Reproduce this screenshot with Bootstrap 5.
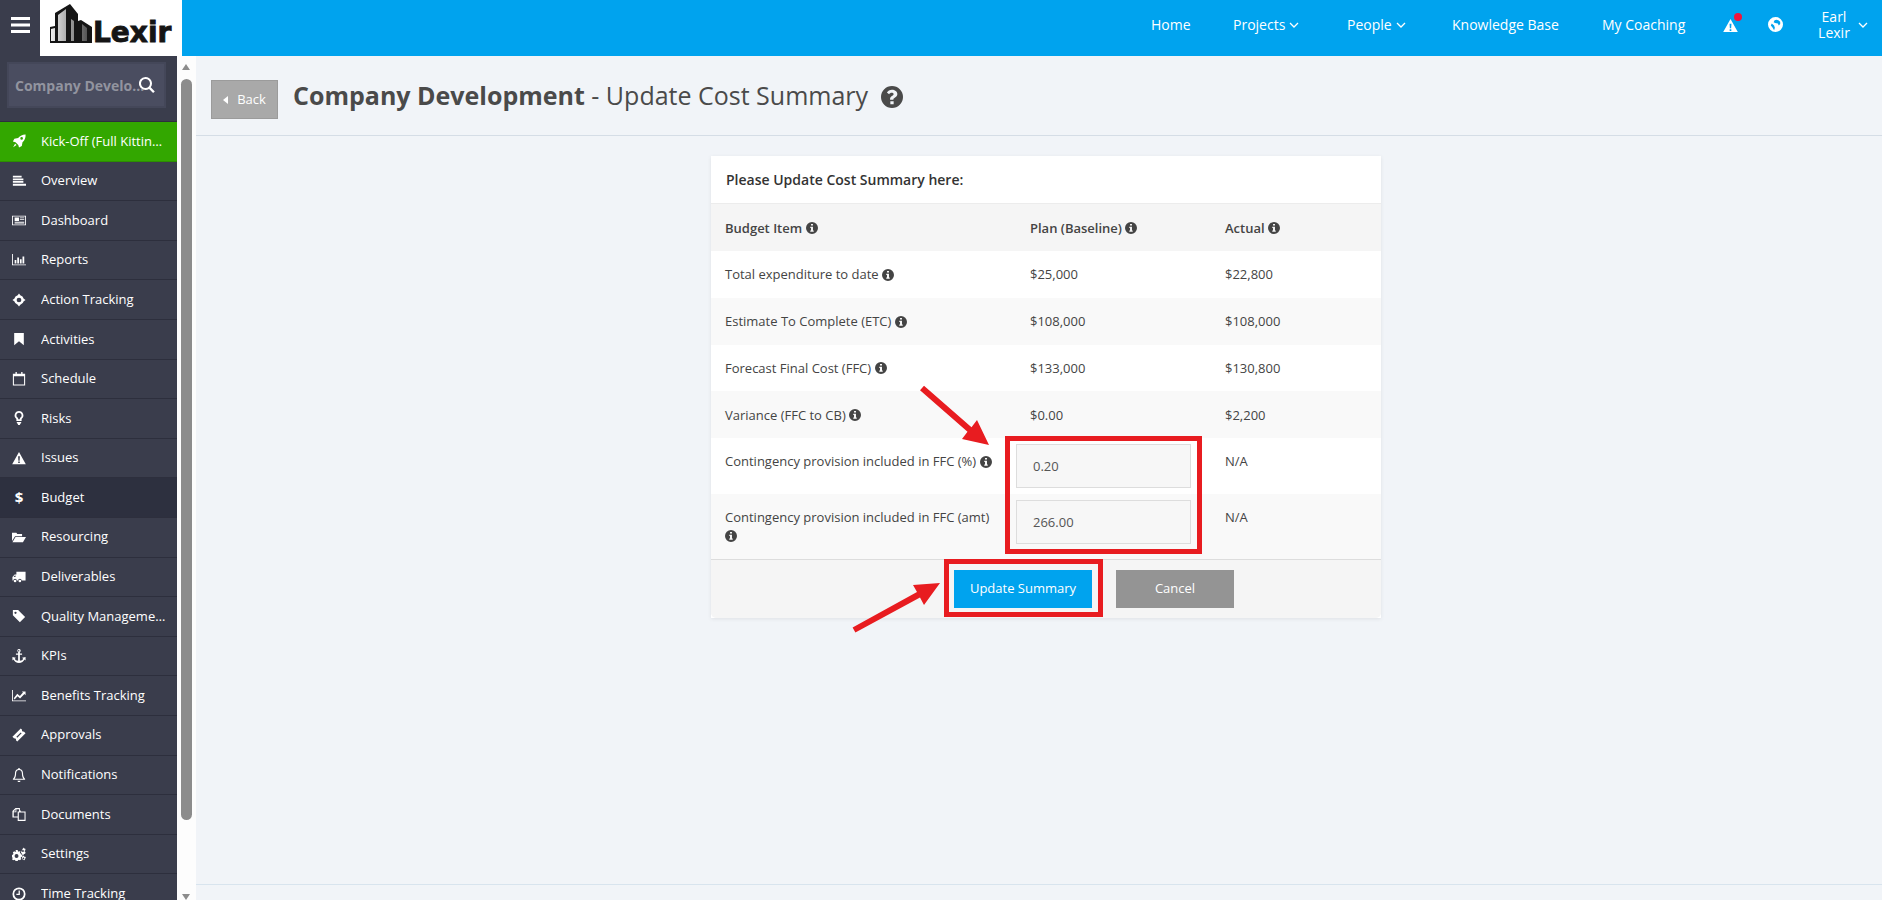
<!doctype html>
<html lang="en"><head><meta charset="utf-8"><title>Update Cost Summary</title>
<link rel="stylesheet" href="https://cdn.jsdelivr.net/npm/bootstrap@5.3.0/dist/css/bootstrap.min.css">
<style>
html,body{height:900px;overflow:hidden}
body{font-family:"Open Sans","Noto Sans",sans-serif;font-size:13px;color:#444;background:#f1f4f8;position:relative}
.ic{width:14px;height:14px;fill:currentColor;flex:none}
.topbar{height:56px;background:#00a3ee;padding:0}
.burger{width:40px;height:56px;background:#3a3d4c;color:#fff}
.logo-box{width:142px;height:56px;background:#fff}
.logo-word{font-family:"DejaVu Sans",sans-serif;font-weight:700;font-size:28px;stroke:#151515;stroke-width:.9px;fill:#151515}
.topnav{color:#fff;font-size:14px;flex:1;height:56px;position:relative}
.topnav a{color:#fff;text-decoration:none;position:absolute;top:15px;line-height:19px;white-space:nowrap}
.topnav a .ic{display:block;width:15px;height:15px}
.chev{width:10px;height:6px;fill:none;stroke:#fff;stroke-width:1.3;margin-left:4px;vertical-align:2px}
.user-name{position:absolute;left:1620px;top:9px;width:64px;text-align:center;line-height:16px}
.dot{position:absolute;left:1552px;top:13px;width:8px;height:8px;border-radius:50%;background:#f0143c}
.shell{height:844px}
.sidebar{width:177px;background:#3a3d4c;flex:none;overflow:hidden}
.search-wrap{height:66px;padding:6px 7px 14px;border-bottom:1px solid #2d2f3d;position:relative}
.search-input{width:159px;height:46px;background:#4a4d60;border:2px solid #444759;color:#92949f;font-weight:700;font-size:14px;padding:0 14px 0 6px;text-overflow:ellipsis;outline:0;font-family:inherit;display:block}
.search-ic{position:absolute;left:139px;top:21px;color:#fff;width:16px;height:16px}
.side-link{height:39.6px;padding:0 10px 0 12px;color:#fff;font-size:13px;border-bottom:1px solid #2d2f3d;text-decoration:none;gap:15px}
.side-link:hover{color:#fff}
.side-link span.lbl{white-space:nowrap;overflow:hidden;text-overflow:ellipsis;min-width:0;flex:1}
.side-link.go{background:#33a700;border-bottom-color:#2c8f00}
.side-link.on{background:#2d303f}
.dollar{width:14px;text-align:center;font-weight:700;font-size:15px;flex:none}
.track{width:19px;background:#fdfdfd;flex:none;position:relative;padding:0 4px}
.thumb{position:absolute;left:4px;top:23px;width:11px;height:741px;background:#8c8c8c;border-radius:6px}
.up{position:absolute;left:5px;top:8px;border:4.5px solid transparent;border-bottom:6px solid #8c8c8c;border-top:0}
.dn{position:absolute;left:5px;top:838px;border:4.5px solid transparent;border-top:6px solid #8c8c8c;border-bottom:0}
.main-pane{flex:1;min-width:0;background:#f1f4f8;height:844px}
.page-head{height:80px;border-bottom:1px solid #d5dde6;padding:24px 0 0 15px;gap:15px}
.back-btn{width:67px;height:39px;background:#a9a9a9;border:1px solid #9b9b9b;border-radius:0;color:#fff;font-size:13px;padding:0;gap:9px}
.back-btn:hover{background:#a9a9a9;color:#fff}
.tri{border:4px solid transparent;border-right:5px solid #fff;border-left:0;display:inline-block}
.page-title{font-size:25px;font-weight:400;color:#4a4a4a;margin:0;line-height:34px;margin-top:-2px}
.help{width:22px;height:22px;fill:#4a4a4a;margin-left:6px;vertical-align:-3px}
.cost-card{width:670px;margin:20px 0 0 515px;border:0;border-radius:0;background:#fff;box-shadow:0 1px 4px rgba(0,0,0,.08)}
.cost-head{height:48px;padding:0 15px;background:#fff;font-size:14px;font-weight:600;color:#333;border-bottom:1px solid #ececec;border-radius:0}
.cost-table{margin:0;table-layout:fixed;--bs-table-bg:transparent;color:#444;font-size:13px}
.cost-table td,.cost-table th{border:0;padding:0 14px;vertical-align:middle;line-height:18px;box-shadow:none;color:#444}
.cost-table th{font-weight:600;background:#f5f5f5;height:47px}
.cost-table tbody tr{height:46.75px}
.cost-table tbody tr.alt td{background:#f9f9f9}
.cost-table tr.inp1{height:56px}.cost-table tr.inp2{height:65px}
.cost-table tr.inp1 td,.cost-table tr.inp2 td{vertical-align:top;padding-top:14px}
.cost-table td.inp-cell{padding:6px 20px 0 0!important}
.val-input{height:44px;width:175px;background:#f7f7f7;border:1px solid #ddd;border-radius:0;color:#555;font-size:13px;padding:0 16px}
.val-input:focus{background:#f7f7f7;border-color:#ddd;box-shadow:none}
.inf{width:12px;height:12px;fill:#444;vertical-align:-1.5px}
.cost-foot{height:59px;padding:10px 0 0 243px;background:#f5f5f5;border-top:1px solid #ddd;gap:24px;border-radius:0}
.btn-upd,.btn-can{height:38px;border:0;border-radius:0;color:#fff;font-size:13px;padding:0}
.btn-upd{width:138px;background:#00a3ee}.btn-can{width:118px;background:#949494}
.btn-upd:hover{background:#00a3ee;color:#fff}.btn-can:hover{background:#949494;color:#fff}
.page-foot{position:absolute;left:196px;right:0;top:884px;height:16px;border-top:1px solid #d8e4ee}
.annot{position:absolute;left:0;top:0;width:1882px;height:900px;pointer-events:none}
</style></head><body>
<svg width="0" height="0" style="position:absolute">
<defs>
<linearGradient id="g" x1="0" x2="1"><stop offset="0" stop-color="#eee"/><stop offset=".55" stop-color="#999"/><stop offset="1" stop-color="#555"/></linearGradient>
<symbol id="list" viewBox="0 0 16 16"><path d="M1 2h10v2H1zM1 5h12v2H1zM1 8h12v2H1zM1 11h15v2.500H1z"/></symbol>
<symbol id="news" viewBox="0 0 16 16"><path fill-rule="evenodd" d="M0 3h16v11H0zM1 4v9h14V4zM3 5h5v4H3zM9 5h5v1H9zM9 7h5v1H9zM3 10h11v1H3zM3 12h11v.6H3z"/></symbol>
<symbol id="bars" viewBox="0 0 16 16"><path d="M0 1h1v12h15v1H0zM3 8h2v4H3zM6 5h2v7H6zM9 7h2v5H9zM12 4h2v8h-2z"/></symbol>
<symbol id="cross" viewBox="0 0 16 16"><path fill-rule="evenodd" d="M8 .5l1.500 2.100a5.500 5.500 0 0 1 3.900 3.900L15.500 8l-2.100 1.500a5.500 5.500 0 0 1-3.900 3.900L8 15.500l-1.500-2.100a5.500 5.500 0 0 1-3.900-3.900L.5 8l2.100-1.500a5.500 5.500 0 0 1 3.900-3.900zM8 5.300a2.700 2.700 0 1 0 0 5.400 2.700 2.700 0 0 0 0-5.400z"/></symbol>
<symbol id="mark" viewBox="0 0 16 16"><path d="M2.500 1h11v14L8 10.500 2.500 15z"/></symbol>
<symbol id="cal" viewBox="0 0 16 16"><path fill-rule="evenodd" d="M1 2h3V0h1.500v2h5V0H12v2h3v13.500H1zM2.200 4.800v9.500h11.600V4.800z"/></symbol>
<symbol id="bulb" viewBox="0 0 16 16"><path fill-rule="evenodd" d="M8 0a5 5 0 0 1 3 9v2.500H5V9a5 5 0 0 1 3-9zM8 2a3 3 0 0 0-1.800 5.400L7 8v1.500h2V8l.8-.6A3 3 0 0 0 8 2zM5.500 12.500h5v1.200l-1 .8-.5 1.500H7l-.5-1.500-1-.8z"/></symbol>
<symbol id="warn" viewBox="0 0 16 16"><path fill-rule="evenodd" d="M8 1l7.800 14H.2zM7 6l.3 5h1.400L9 6zM7.100 12v1.800h1.800V12z"/></symbol>
<symbol id="folder" viewBox="0 0 16 16"><path d="M0 3h5l1 1.500h5.500V7H3.500L0 12.500zM4 8h12l-3.500 6H.5z"/></symbol>
<symbol id="truck" viewBox="0 0 16 16"><path fill-rule="evenodd" d="M5 2h10.500v10H11a2 2 0 0 0-4 0H5.500a2 2 0 0 0-4 0H.5V8L3 5h2zM3.300 6.300L1.800 8H4V6.300zM3.500 11a1.500 1.500 0 1 1 0 3 1.500 1.500 0 0 1 0-3zM9 11a1.500 1.500 0 1 1 0 3 1.500 1.500 0 0 1 0-3z"/></symbol>
<symbol id="tag" viewBox="0 0 16 16"><path fill-rule="evenodd" d="M1 1h6l8 8-6 6-8-8zM4 3a1.300 1.300 0 1 0 0 2.600A1.300 1.300 0 0 0 4 3z"/></symbol>
<symbol id="anchor" viewBox="0 0 16 16"><path fill-rule="evenodd" d="M8 0a2 2 0 0 1 1 3.700V5h2.500v1.500H9v7c2 0 3.300-1 3.800-2.300L11.500 10 15.500 9v4l-1.200-1C13.300 14 11 16 8 16s-5.300-2-6.300-4L.5 13V9l4 1-1.300 1.200C3.700 12.500 5 13.500 7 13.500v-7H4.500V5H7V3.700A2 2 0 0 1 8 0zM8 1.300a.8.8 0 1 0 0 1.500.8.8 0 0 0 0-1.500z"/></symbol>
<symbol id="line" viewBox="0 0 16 16"><path d="M0 1h1v12h15v1H0zM2 10.500l4-5 3 2.500 3.500-4-1.200-1.200H15.500V7l-1.300-1.300L9.200 10.800 6.300 8.300 3 12z"/></symbol>
<symbol id="ticket" viewBox="0 0 16 16"><path fill-rule="evenodd" d="M10 .5l1.500 1.500a1.500 1.500 0 0 0 2 2L15.500 6 6 15.500 4.500 14a1.500 1.500 0 0 0-2-2L.5 10zM10 5L5 10l1 1 5-5z"/></symbol>
<symbol id="bell" viewBox="0 0 16 16"><path fill-rule="evenodd" d="M8 0a1 1 0 0 1 1 1.100c2.400.5 3.600 2.500 3.600 5 0 3 .8 4.900 2.400 6.400v1H1v-1c1.600-1.500 2.400-3.400 2.400-6.400 0-2.500 1.200-4.500 3.600-5A1 1 0 0 1 8 0zM8 2.300c-2.200 0-3.300 1.700-3.300 3.800 0 2.800-.6 4.800-1.700 6.200h10c-1.100-1.400-1.700-3.400-1.700-6.200 0-2.100-1.100-3.800-3.300-3.800zM6.300 14.500h3.400a1.700 1.700 0 0 1-3.400 0z"/></symbol>
<symbol id="files" viewBox="0 0 16 16"><path fill-rule="evenodd" d="M4 1h5v3h1V5h5.500v11H6.500v-4H.5V4.500zM4 2.500L2 5h2zM5 2.500V6H2v4.800h4.500V5h1.500V2.500zM7.800 6.300v8.400h6.500V6.300z"/></symbol>
<symbol id="cogs" viewBox="0 0 16 16"><path fill-rule="evenodd" d="M4 3.500h2.500l.3 1.300 1.100.5 1.200-.7 1.500 1.600-.7 1.100.5 1.200 1.200.3v2.300l-1.200.3-.5 1.100.7 1.200-1.500 1.500-1.200-.7-1.100.5-.3 1.200H4l-.3-1.200-1.100-.5-1.200.7L0 14l.7-1.200-.4-1.100L0 11.400V9l1.200-.3.4-1.200-.7-1.100 1.500-1.600 1.200.7 1.100-.5zM5.200 8a2.200 2.200 0 1 0 0 4.500 2.200 2.200 0 0 0 0-4.500zM13 .5l.7 1.200 1.300.1.500 1.700-1 .9v.8l1 .8-.5 1.700-1.300.2-.7 1.100-1.600-.5-.3-1.300-.6-.4-1.200.4-.2-.2V5l.2-.1 1.200.4.6-.4.3-1.300zM12.500 3.400a1.100 1.100 0 1 0 0 2.200 1.100 1.100 0 0 0 0-2.200zM13.500 10l.6 1 1.300.2.400 1.500-1 .8v.7l-.9 1-1.200-.5-.6-.6-.8-.1.100-1.500.1-1 .5-.4.100-1.300zM13 12a1 1 0 1 0 0 2 1 1 0 0 0 0-2z"/></symbol>
<symbol id="clock" viewBox="0 0 16 16"><path fill-rule="evenodd" d="M8 .5a7.500 7.500 0 1 1 0 15 7.500 7.500 0 0 1 0-15zM8 2.500a5.500 5.500 0 1 0 0 11 5.500 5.500 0 0 0 0-11zM7.500 4H9v5H5V7.800h2.500z"/></symbol>
<symbol id="rocket" viewBox="0 0 16 16"><path fill-rule="evenodd" d="M15.500.5c.3 3.600-.9 6.500-3.500 9l-.8 4.300L8 15.500l-.8-3L4 9.300l-3-.8L2.700 5.300 7 4.500C9.500 1.800 12 .4 15.500.5zM11 3.500a1.500 1.500 0 1 0 0 3 1.500 1.500 0 0 0 0-3zM3.500 11l1.700 1.700-3.900 2.500z"/></symbol>
<symbol id="search" viewBox="0 0 16 16"><path fill-rule="evenodd" d="M6.500 0a6.500 6.500 0 0 1 5.200 10.300l4.100 4.100-1.700 1.600-4-4.100A6.500 6.500 0 1 1 6.500 0zM6.500 2a4.500 4.500 0 1 0 0 9 4.500 4.500 0 0 0 0-9z"/></symbol>
<symbol id="info" viewBox="0 0 16 16"><path fill-rule="evenodd" d="M8 0a8 8 0 1 1 0 16A8 8 0 0 1 8 0zM6.700 2.500v2.300h2.600V2.500zM5.700 6.200v1.700h1v3.300h-1V13h4.600v-1.800h-1V6.200z"/></symbol>
<symbol id="help" viewBox="0 0 16 16"><path fill-rule="evenodd" d="M8 0a8 8 0 1 1 0 16A8 8 0 0 1 8 0zM6.800 11v2.300h2.400V11zM8 2.700C6.300 2.700 5 3.500 4.300 4.800l1.600 1.200c.5-.7 1-1.100 1.900-1.100.8 0 1.400.4 1.400 1 0 .6-.4.900-1.200 1.300-.9.500-1.400 1.100-1.400 2.100V10h2.400c0-.7.300-1 1-1.400 1-.6 1.900-1.300 1.900-2.700 0-2-1.900-3.200-3.900-3.200z"/></symbol>
<symbol id="globe" viewBox="0 0 16 16"><path fill-rule="evenodd" d="M8 0a8 8 0 1 1 0 16A8 8 0 0 1 8 0zM9 3l-2 .5-1 2 1.500 1 3 .5 1 2 1.500-1.500V5L11 3.500zM4 7L3 9l2 2.500 1.500 2.500.8-2.500-.8-2.500z"/></symbol>
</defs></svg>

<nav class="navbar topbar d-flex flex-nowrap align-items-stretch">
  <div class="burger d-flex align-items-center justify-content-center"><svg width="19" height="16" viewBox="0 0 19 16" fill="currentColor" style="margin-top:-6px"><path d="M0 0h19v3H0zM0 6.500h19v3H0zM0 13h19v3H0z"/></svg></div>
  <div class="logo-box"><svg width="142" height="56" viewBox="0 0 142 56">
    <path fill="#151515" d="M10 43V27l5-1V13l15-9 8 10v7l3-1 11 7v16z"/>
    <path fill="url(#g)" d="M18 41V15l8-6v32zM31 41V19l3 2v20zM11 41V29l4-1v13zM42 41V24l5 4v13z"/>
    <text class="logo-word" x="53" y="42">Lexir</text></svg></div>
  <div class="topnav">
    <a style="left:969px">Home</a>
    <a style="left:1051px">Projects<svg class="chev" viewBox="0 0 10 6"><path d="M1 1l4 4 4-4"/></svg></a>
    <a style="left:1165px">People<svg class="chev" viewBox="0 0 10 6"><path d="M1 1l4 4 4-4"/></svg></a>
    <a style="left:1270px">Knowledge Base</a>
    <a style="left:1420px">My Coaching</a>
    <a style="left:1541px;top:18px"><svg class="ic"><use href="#warn"/></svg></a>
    <span class="dot"></span>
    <a style="left:1586px;top:17px"><svg class="ic"><use href="#globe"/></svg></a>
    <span class="user-name">Earl<br>Lexir</span>
    <a style="left:1672px;top:15px"><svg class="chev" viewBox="0 0 10 6"><path d="M1 1l4 4 4-4"/></svg></a>
  </div>
</nav>
<div class="shell d-flex">
  <aside class="sidebar">
    <div class="search-wrap"><input class="search-input" value="Company Development" aria-label="Search"><svg class="ic search-ic"><use href="#search"/></svg></div>
    <ul class="nav flex-column flex-nowrap">
      <li><a class="side-link go d-flex align-items-center" href="#"><svg class="ic"><use href="#rocket"/></svg><span class="lbl">Kick-Off (Full Kitting Process)</span></a></li>
      <li><a class="side-link d-flex align-items-center" href="#"><svg class="ic"><use href="#list"/></svg><span class="lbl">Overview</span></a></li>
      <li><a class="side-link d-flex align-items-center" href="#"><svg class="ic"><use href="#news"/></svg><span class="lbl">Dashboard</span></a></li>
      <li><a class="side-link d-flex align-items-center" href="#"><svg class="ic"><use href="#bars"/></svg><span class="lbl">Reports</span></a></li>
      <li><a class="side-link d-flex align-items-center" href="#"><svg class="ic"><use href="#cross"/></svg><span class="lbl">Action Tracking</span></a></li>
      <li><a class="side-link d-flex align-items-center" href="#"><svg class="ic"><use href="#mark"/></svg><span class="lbl">Activities</span></a></li>
      <li><a class="side-link d-flex align-items-center" href="#"><svg class="ic"><use href="#cal"/></svg><span class="lbl">Schedule</span></a></li>
      <li><a class="side-link d-flex align-items-center" href="#"><svg class="ic"><use href="#bulb"/></svg><span class="lbl">Risks</span></a></li>
      <li><a class="side-link d-flex align-items-center" href="#"><svg class="ic"><use href="#warn"/></svg><span class="lbl">Issues</span></a></li>
      <li><a class="side-link on d-flex align-items-center" href="#"><span class="dollar">$</span><span class="lbl">Budget</span></a></li>
      <li><a class="side-link d-flex align-items-center" href="#"><svg class="ic"><use href="#folder"/></svg><span class="lbl">Resourcing</span></a></li>
      <li><a class="side-link d-flex align-items-center" href="#"><svg class="ic"><use href="#truck"/></svg><span class="lbl">Deliverables</span></a></li>
      <li><a class="side-link d-flex align-items-center" href="#"><svg class="ic"><use href="#tag"/></svg><span class="lbl">Quality Management</span></a></li>
      <li><a class="side-link d-flex align-items-center" href="#"><svg class="ic"><use href="#anchor"/></svg><span class="lbl">KPIs</span></a></li>
      <li><a class="side-link d-flex align-items-center" href="#"><svg class="ic"><use href="#line"/></svg><span class="lbl">Benefits Tracking</span></a></li>
      <li><a class="side-link d-flex align-items-center" href="#"><svg class="ic"><use href="#ticket"/></svg><span class="lbl">Approvals</span></a></li>
      <li><a class="side-link d-flex align-items-center" href="#"><svg class="ic"><use href="#bell"/></svg><span class="lbl">Notifications</span></a></li>
      <li><a class="side-link d-flex align-items-center" href="#"><svg class="ic"><use href="#files"/></svg><span class="lbl">Documents</span></a></li>
      <li><a class="side-link d-flex align-items-center" href="#"><svg class="ic"><use href="#cogs"/></svg><span class="lbl">Settings</span></a></li>
      <li><a class="side-link d-flex align-items-center" href="#"><svg class="ic"><use href="#clock"/></svg><span class="lbl">Time Tracking</span></a></li>
    </ul>
  </aside>
  <div class="track"><span class="up"></span><span class="thumb"></span><span class="dn"></span></div>
  <main class="main-pane">
    <div class="page-head d-flex align-items-start">
      <button class="btn back-btn d-flex align-items-center justify-content-center"><i class="tri"></i>Back</button>
      <h1 class="page-title"><b>Company Development</b> - Update Cost Summary <svg class="help"><use href="#help"/></svg></h1>
    </div>
    <div class="card cost-card">
      <div class="card-header cost-head d-flex align-items-center">Please Update Cost Summary here:</div>
      <table class="table cost-table">
        <colgroup><col style="width:305px"><col style="width:195px"><col style="width:170px"></colgroup>
        <thead><tr><th>Budget Item <svg class="inf"><use href="#info"/></svg></th><th>Plan (Baseline) <svg class="inf"><use href="#info"/></svg></th><th>Actual <svg class="inf"><use href="#info"/></svg></th></tr></thead>
        <tbody>
          <tr><td>Total expenditure to date <svg class="inf"><use href="#info"/></svg></td><td>$25,000</td><td>$22,800</td></tr>
          <tr class="alt"><td>Estimate To Complete (ETC) <svg class="inf"><use href="#info"/></svg></td><td>$108,000</td><td>$108,000</td></tr>
          <tr><td>Forecast Final Cost (FFC) <svg class="inf"><use href="#info"/></svg></td><td>$133,000</td><td>$130,800</td></tr>
          <tr class="alt"><td>Variance (FFC to CB) <svg class="inf"><use href="#info"/></svg></td><td>$0.00</td><td>$2,200</td></tr>
          <tr class="inp1"><td>Contingency provision included in FFC (%) <svg class="inf"><use href="#info"/></svg></td><td class="inp-cell"><input class="form-control val-input" value="0.20"></td><td>N/A</td></tr>
          <tr class="inp2 alt"><td>Contingency provision included in FFC (amt) <svg class="inf"><use href="#info"/></svg></td><td class="inp-cell"><input class="form-control val-input" value="266.00"></td><td>N/A</td></tr>
        </tbody>
      </table>
      <div class="card-footer cost-foot d-flex align-items-start"><button class="btn btn-upd">Update Summary</button><button class="btn btn-can">Cancel</button></div>
    </div>
  </main>
</div>
<div class="page-foot"></div>
<svg class="annot" viewBox="0 0 1882 900">
  <g fill="none" stroke="#e81c20" stroke-width="5">
    <rect x="1007.500" y="438.500" width="192" height="113"/>
    <rect x="946.500" y="561.500" width="154" height="53"/>
  </g>
  <g fill="#e81c20">
    <path d="M924 385.700L971.500 427.200 977 420 989 445 962 439 967.500 431.800 920 390.300z"/>
    <path d="M852.600 627.400L917 592 913 585 940 583 924 605 920 597.400 855.400 632.600z"/>
  </g>
</svg>
</body></html>
